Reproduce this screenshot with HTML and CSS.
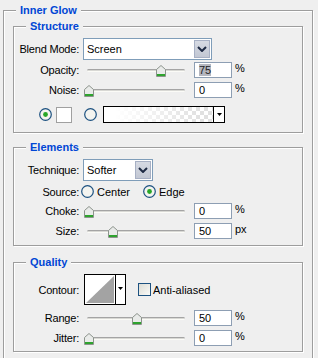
FILE: index.html
```html
<!DOCTYPE html>
<html>
<head>
<meta charset="utf-8">
<link rel="stylesheet" href="styles.css">
</head>
<body>
<div class="outer">
  <div class="title">Inner Glow</div>

  <div class="group g-struct">
    <div class="title">Structure</div>
    <div class="row r-blend">
      <span class="label">Blend Mode:</span>
      <div class="select w-blend">
        <span class="sel-text">Screen</span>
        <span class="sel-btn"><svg width="10" height="6" viewBox="0 0 10 6"><path d="M1 1 L5 5 L9 1" fill="none" stroke="#1e2a44" stroke-width="2"/></svg></span>
      </div>
    </div>
    <div class="row r-opacity">
      <span class="label">Opacity:</span>
      <div class="slider"><div class="track"></div><svg class="thumb" style="left:73px" width="10" height="12" viewBox="0 0 10 12"><path d="M0.5 4.5 L5 0.5 L9.5 4.5 V11.5 H0.5 Z" fill="#e9ebe9" stroke="#8c948c"/><rect x="1" y="9" width="8" height="2" fill="#2ea32e"/></svg></div>
      <div class="field"><span class="hl">75</span></div>
      <span class="unit">%</span>
    </div>
    <div class="row r-noise">
      <span class="label">Noise:</span>
      <div class="slider"><div class="track"></div><svg class="thumb" style="left:1px" width="10" height="12" viewBox="0 0 10 12"><path d="M0.5 4.5 L5 0.5 L9.5 4.5 V11.5 H0.5 Z" fill="#e9ebe9" stroke="#8c948c"/><rect x="1" y="9" width="8" height="2" fill="#2ea32e"/></svg></div>
      <div class="field">0</div>
      <span class="unit">%</span>
    </div>
    <div class="row r-color">
      <svg class="radio rc1" width="13" height="13" viewBox="0 0 13 13"><circle cx="6.5" cy="6.5" r="5.8" fill="#f4f4f0" stroke="#1c5180" stroke-width="1.2"/><circle cx="6.5" cy="6.5" r="2.4" fill="#27a627"/></svg>
      <span class="swatch"></span>
      <svg class="radio rc2" width="13" height="13" viewBox="0 0 13 13"><circle cx="6.5" cy="6.5" r="5.8" fill="#f4f4f0" stroke="#1c5180" stroke-width="1.2"/></svg>
      <div class="gradbox"><span class="grad"></span><span class="gbtn"><svg width="5" height="3" viewBox="0 0 5 3"><path d="M0 0 H5 L2.5 3 Z" fill="#000"/></svg></span></div>
    </div>
  </div>

  <div class="group g-elem">
    <div class="title">Elements</div>
    <div class="row r-tech">
      <span class="label">Technique:</span>
      <div class="select w-tech">
        <span class="sel-text">Softer</span>
        <span class="sel-btn"><svg width="10" height="6" viewBox="0 0 10 6"><path d="M1 1 L5 5 L9 1" fill="none" stroke="#1e2a44" stroke-width="2"/></svg></span>
      </div>
    </div>
    <div class="row r-source">
      <span class="label lab-src">Source:</span>
      <span class="opt opt1"><svg class="radio" width="13" height="13" viewBox="0 0 13 13"><circle cx="6.5" cy="6.5" r="5.8" fill="#f4f4f0" stroke="#1c5180" stroke-width="1.2"/></svg><span class="opt-text">Center</span></span>
      <span class="opt"><svg class="radio" width="13" height="13" viewBox="0 0 13 13"><circle cx="6.5" cy="6.5" r="5.8" fill="#f4f4f0" stroke="#1c5180" stroke-width="1.2"/><circle cx="6.5" cy="6.5" r="2.4" fill="#27a627"/></svg><span class="opt-text">Edge</span></span>
    </div>
    <div class="row r-choke">
      <span class="label">Choke:</span>
      <div class="slider"><div class="track"></div><svg class="thumb" style="left:1px" width="10" height="12" viewBox="0 0 10 12"><path d="M0.5 4.5 L5 0.5 L9.5 4.5 V11.5 H0.5 Z" fill="#e9ebe9" stroke="#8c948c"/><rect x="1" y="9" width="8" height="2" fill="#2ea32e"/></svg></div>
      <div class="field">0</div>
      <span class="unit">%</span>
    </div>
    <div class="row r-size">
      <span class="label">Size:</span>
      <div class="slider"><div class="track"></div><svg class="thumb" style="left:25px" width="10" height="12" viewBox="0 0 10 12"><path d="M0.5 4.5 L5 0.5 L9.5 4.5 V11.5 H0.5 Z" fill="#e9ebe9" stroke="#8c948c"/><rect x="1" y="9" width="8" height="2" fill="#2ea32e"/></svg></div>
      <div class="field">50</div>
      <span class="unit">px</span>
    </div>
  </div>

  <div class="group g-qual">
    <div class="title">Quality</div>
    <div class="row r-contour">
      <span class="label">Contour:</span>
      <div class="contour">
        <svg class="curve" width="30" height="29" viewBox="0 0 30 29"><rect width="30" height="29" fill="#fff"/><path d="M1 28 L29 1 V28 Z" fill="#a3a3a3"/></svg>
        <span class="cbtn"><svg width="5" height="3" viewBox="0 0 5 3"><path d="M0 0 H5 L2.5 3 Z" fill="#000"/></svg></span>
      </div>
      <span class="check"></span>
      <span class="check-text">Anti-aliased</span>
    </div>
    <div class="row r-range">
      <span class="label">Range:</span>
      <div class="slider"><div class="track"></div><svg class="thumb" style="left:49px" width="10" height="12" viewBox="0 0 10 12"><path d="M0.5 4.5 L5 0.5 L9.5 4.5 V11.5 H0.5 Z" fill="#e9ebe9" stroke="#8c948c"/><rect x="1" y="9" width="8" height="2" fill="#2ea32e"/></svg></div>
      <div class="field">50</div>
      <span class="unit">%</span>
    </div>
    <div class="row r-jitter">
      <span class="label">Jitter:</span>
      <div class="slider"><div class="track"></div><svg class="thumb" style="left:1px" width="10" height="12" viewBox="0 0 10 12"><path d="M0.5 4.5 L5 0.5 L9.5 4.5 V11.5 H0.5 Z" fill="#e9ebe9" stroke="#8c948c"/><rect x="1" y="9" width="8" height="2" fill="#2ea32e"/></svg></div>
      <div class="field">0</div>
      <span class="unit">%</span>
    </div>
  </div>
</div>
</body>
</html>
```

FILE: styles.css
```css
html, body {
  margin: 0;
  padding: 0;
  overflow: hidden;
  background: #efefef;
  font: 11px "Liberation Sans", Arial, sans-serif;
  color: #000;
}

.outer {
  margin: 10px 0 0 3px;
  width: 310px;
  height: 349px;
  box-sizing: border-box;
  border: 1px solid #9d9d9d;
  box-shadow: 1px 1px 0 #fff, inset 1px 1px 0 #fff;
  padding-left: 9px;
}

.title {
  display: table;
  margin: -7px 0 0 3px;
  padding: 0 4px;
  height: 13px;
  line-height: 13px;
  background: #efefef;
  color: #0046d5;
  font-weight: bold;
}

.group {
  width: 290px;
  box-sizing: border-box;
  border: 1px solid #9d9d9d;
  box-shadow: 1px 1px 0 #fff, inset 1px 1px 0 #fff;
}
.group .title { margin-left: 12px; }

.g-struct { margin-top: 9px; height: 107px; }
.g-elem { margin-top: 14px; height: 99px; }
.g-qual { margin-top: 16px; height: 90px; }

.row {
  display: flex;
  align-items: center;
}
.label {
  flex: none;
  width: 65px;
  margin-right: 4px;
  text-align: right;
  white-space: nowrap;
  letter-spacing: -0.2px;
}

.r-blend { margin-top: 5px; height: 22px; }
.r-opacity { margin-top: 2px; height: 16px; }
.r-noise { margin-top: 4px; height: 16px; }
.r-color { margin-top: 8px; height: 17px; }

.r-tech { margin-top: 5px; height: 22px; }
.r-source { margin-top: 4px; height: 13px; }
.r-choke { margin-top: 5px; height: 16px; }
.r-size { margin-top: 4px; height: 16px; }

.r-contour { margin-top: 5px; height: 31px; }
.r-range { margin-top: 5px; height: 16px; }
.r-jitter { margin-top: 4px; height: 16px; }

/* select */
.select {
  display: flex;
  box-sizing: border-box;
  height: 22px;
  border: 1px solid #7f9db9;
  background: #fff;
  padding: 1px;
}
.w-blend { width: 129px; }
.w-tech { width: 70px; }
.sel-text {
  flex: 1;
  padding-left: 2px;
  line-height: 18px;
}
.sel-btn {
  flex: none;
  width: 16px;
  box-sizing: border-box;
  border: 1px solid #a7b0c4;
  background: linear-gradient(#d6dae3, #c2c7d3);
  display: flex;
  align-items: center;
  justify-content: center;
}

/* slider */
.slider {
  position: relative;
  flex: none;
  width: 111px;
  height: 16px;
}
.track {
  margin: 7px 0 0 4px;
  width: 98px;
  height: 1px;
  background: #d8d8d4;
  border-top: 1px solid #a4a4a4;
  border-bottom: 1px solid #fbfbf7;
  border-radius: 2px;
}
.thumb {
  position: absolute;
  top: 3px;
}

.field {
  flex: none;
  width: 38px;
  height: 16px;
  box-sizing: border-box;
  border: 1px solid #8d9eb3;
  background: #fff;
  padding-left: 4px;
  line-height: 14px;
}
.hl {
  background: #b4b6bf;
  color: #222;
}
.unit {
  margin-left: 3px;
  align-self: flex-start;
  line-height: 12px;
}

/* color row */
.radio { flex: none; display: block; }
.rc1 { margin-left: 25px; }
.swatch {
  margin-left: 4px;
  width: 16px;
  height: 16px;
  box-sizing: border-box;
  border: 1px solid #a0a0a0;
  background: #fff;
}
.rc2 { margin-left: 12px; }
.gradbox {
  margin-left: 6px;
  display: flex;
  width: 122px;
  height: 17px;
  box-sizing: border-box;
  border: 1px solid #000;
}
.grad {
  flex: 1;
  background:
    linear-gradient(to right, #fff 10%, rgba(255,255,255,0) 90%),
    repeating-conic-gradient(#e0e0e0 0 25%, #fff 0 50%) 0 0 / 8px 8px;
}
.gbtn {
  flex: none;
  width: 10px;
  border-left: 1px solid #000;
  background: #fff;
  display: flex;
  align-items: center;
  justify-content: center;
}

/* source */
.lab-src { margin-right: 2px; }
.opt {
  display: flex;
  align-items: center;
}
.opt1 { width: 62px; }
.opt-text { margin-left: 3px; }

/* contour */
.contour {
  margin-left: 1px;
  display: flex;
  width: 42px;
  height: 31px;
  box-sizing: border-box;
  border: 1px solid #000;
}
.curve { display: block; flex: none; }
.cbtn {
  flex: 1;
  border-left: 1px solid #000;
  background: #fff;
  display: flex;
  align-items: center;
  justify-content: center;
  padding-bottom: 2px;
}
.check {
  margin-left: 12px;
  width: 13px;
  height: 13px;
  box-sizing: border-box;
  border: 1px solid #1c5180;
  background: linear-gradient(135deg, #dcdcd4, #fafaf8);
}
.check-text { margin-left: 2px; }
```
